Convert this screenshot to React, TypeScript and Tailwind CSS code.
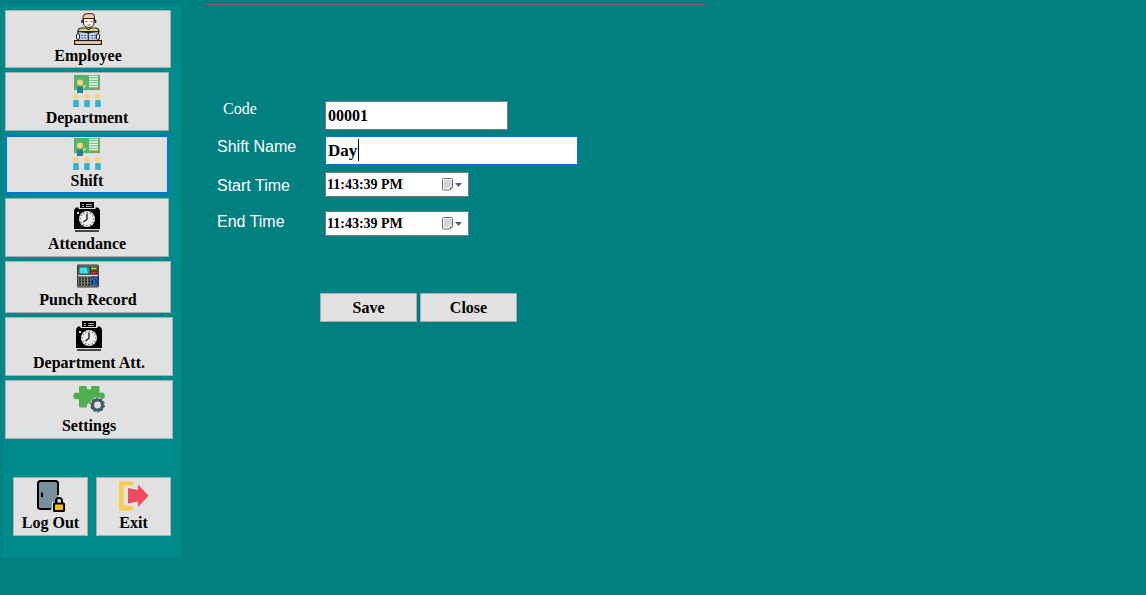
import { useState } from "react";
import type { ReactNode } from "react";
import clsx from "clsx";

function EmployeeIcon() {
  return (
    <svg width="28" height="32" viewBox="0 0 28 32" aria-hidden="true">
      <path d="M9 8V4Q9 .7 13 .7h5q2.500 0 2.500 3V8z" fill="#f6c9a0" stroke="#222" strokeWidth="1" />
      <path d="M9.500 5.500h10.500v4.500q0 4-5.200 4.500Q9.500 14 9.500 10z" fill="#fff1e0" stroke="#222" strokeWidth="1" />
      <path d="M8 7v3M21.500 7v3" stroke="#222" strokeWidth="1.500" />
      <path d="M11.500 8.500h2M16.500 8.500h2M13.500 12h3" stroke="#444" strokeWidth=".8" />
      <path d="M4 18.500q0-3.500 4-3.500h4l2.500 1.500L17 15h4q4 0 4 3.500z" fill="#e8d768" stroke="#222" strokeWidth="1.200" />
      <path d="M3.800 18.500l10.400 1.200 10.300-1.200V27.500H3.800z" fill="#bccdf7" stroke="#222" strokeWidth="1.200" />
      <path d="M14.300 19.500V27.500" stroke="#222" strokeWidth="1.200" />
      <path d="M7 22.500h2m1 0h2M7 25h2m1 0h2M17 22.500h2m1 0h2M17 25h2m1 0h2" stroke="#333" strokeWidth=".7" />
      <rect x="2.500" y="21" width="3" height="5" rx="1" fill="#fff6e8" stroke="#222" />
      <rect x="22.500" y="21" width="3" height="5" rx="1" fill="#fff6e8" stroke="#222" />
      <rect x=".6" y="27.600" width="26.800" height="3.800" fill="#f8d6b4" stroke="#222" strokeWidth="1.200" />
    </svg>
  );
}

function ClassIcon() {
  return (
    <svg width="28" height="32" viewBox="0 0 28 32" aria-hidden="true">
      <rect x="1" width="26" height="15" fill="#55b56b" />
      <rect x="1" y="15" width="26" height="1" fill="#d3d6da" />
      <path d="M16 1.500h9M16 4h9M16 6.500h9M16 9h9M16 11.500h9" stroke="#f4f8f4" strokeWidth="1.400" />
      <rect x="21" y="13" width="4" height="2" fill="#d97f46" />
      <circle cx="7" cy="7.500" r="3" fill="#fdd27c" />
      <path d="M9.500 13.500l3-3.500" stroke="#fdd27c" strokeWidth="1.800" />
      <path d="M4 18v-5.500q0-1 1-1h4q1 0 1 1V18z" fill="#238291" />
      {[3, 14, 25].map((x) => (
        <g key={x}>
          <circle cx={x} cy="21.500" r="2.800" fill="#fdd27c" />
          <path d={`M${x - 2.8} 32v-6q0-1 1-1h3.600q1 0 1 1v6z`} fill="#34b3d1" />
        </g>
      ))}
    </svg>
  );
}

function PunchClockIcon() {
  return (
    <svg width="26" height="32" viewBox="0 0 26 32" aria-hidden="true">
      <rect x="6" y="1" width="14" height="6" fill="#000" />
      <path d="M8 3.500h2M12 3.500h6M8 5.500h2M12 5.500h6" stroke="#aaa" />
      <path d="M2 6.500H4.500V8H21.500V6.500H24q2 1.500 2 3.500V28H0V10q0-2 2-3.500z" fill="#000" />
      <rect x="3" y="11" width="2" height="2" fill="#e1e1e1" />
      <circle cx="13" cy="18" r="8" fill="#ececec" />
      <circle cx="13" cy="18" r="6.700" fill="none" stroke="#333" strokeWidth="1.300" strokeDasharray="0.9 2.608" strokeDashoffset=".45" />
      <path d="M13 12.500v5.800L9.500 21" fill="none" stroke="#111" strokeWidth="1.300" />
      <path d="M1 30h24" stroke="#111" strokeWidth="1.500" />
    </svg>
  );
}

function KeypadIcon() {
  return (
    <svg width="22" height="25" viewBox="0 0 22 25" aria-hidden="true">
      <rect x=".6" y="1" width="20.800" height="22" rx="1" fill="#858585" stroke="#3c3c3c" strokeWidth="1.200" />
      <rect x="2" y="3" width="10" height="7" fill="#35e7ef" stroke="#222" strokeWidth=".8" />
      <path d="M10.500 4v3" stroke="#146b72" strokeDasharray="1 1" />
      <rect x="13.500" y="3" width="6.500" height="3" fill="#9ddc10" stroke="#222" strokeWidth=".8" />
      <rect x="13.500" y="7" width="6.500" height="3" fill="#e62142" stroke="#222" strokeWidth=".8" />
      <path d="M1 11.500h20" stroke="#d3d3d3" />
      <path d="M2 14.500h11M2 17.500h11M2 20.500h11" stroke="#1f2716" strokeWidth="2" strokeDasharray="2 1" />
      <rect x="14" y="13" width="6.500" height="8" fill="#2877e8" stroke="#122b55" strokeWidth=".8" />
      <path d="M15.500 20v-4l1.700-1.500L19 16v4M16.500 18h1.500" fill="none" stroke="#102247" strokeWidth="1" />
    </svg>
  );
}

function PuzzleIcon() {
  return (
    <svg width="32" height="32" viewBox="0 0 32 32" aria-hidden="true">
      <path
        d="M6 4Q6 3 7 3H13Q14.200 3 13.800 4.200Q13.200 6.500 16 6.500T18.200 4.200Q17.800 3 19 3H25.500Q26.500 3 26.500 4V9Q26.500 10.200 27.700 9.700Q30 9 31.300 10.600Q32.200 13 31.300 15Q30 16.500 27.700 15.800Q26.500 15.300 26.500 16.500V23H19.500Q18.300 23 18 21.800Q17.500 20 16 20T14 22Q14.200 24.500 13 24.500H7Q6 24.500 6 23.500V17Q6 15.500 4.800 16Q2.500 16.800 1 15.500Q-.3 13 1 10.500Q2.500 9 4.800 10Q6 10.300 6 9.200Z"
        fill="#4caf50"
      />
      <circle cx="24.500" cy="22" r="7.800" fill="#e1e1e1" />
      <circle cx="24.500" cy="22" r="5" fill="none" stroke="#455a64" strokeWidth="3.200" />
      <circle cx="24.500" cy="22" r="6.800" fill="none" stroke="#455a64" strokeWidth="1.200" strokeDasharray="2.670 1.603" />
    </svg>
  );
}

function DoorLockIcon() {
  return (
    <svg width="28" height="32" viewBox="0 0 28 32" aria-hidden="true">
      <rect x="1" y="1" width="20" height="28" rx="2.500" fill="#78909c" />
      <path d="M21 15V3.500Q21 1 18.500 1h-15Q1 1 1 3.500v23Q1 29 3.500 29H14" fill="none" stroke="#000" strokeWidth="2" />
      <path d="M5 12.500v4.500" stroke="#000" strokeWidth="2" />
      <path d="M15 22h4v8h-4z" fill="#e1e1e1" />
      <path d="M19 23v-2q0-3 3-3t3 3v2" fill="none" stroke="#000" strokeWidth="2" />
      <rect x="17" y="23.500" width="10" height="7.500" rx=".5" fill="#ffc107" stroke="#000" strokeWidth="2" />
    </svg>
  );
}

function ExitIcon() {
  return (
    <svg width="30" height="32" viewBox="0 0 30 32" aria-hidden="true">
      <path d="M14 5.500V1.500H0v29h14v-4.500H4.500V5.500z" fill="#f9cd4c" />
      <path d="M9 8l10 2V4.500L29.500 15.800 19 27v-5.500l-10 2z" fill="#f04a5d" />
    </svg>
  );
}

interface NavItem {
  label: string;
  icon: ReactNode;
  size: string;
}

const navItems: NavItem[] = [
  { label: "Employee", icon: <EmployeeIcon />, size: "w-[166px]" },
  { label: "Department", icon: <ClassIcon />, size: "w-[164px] pb-px" },
  { label: "Shift", icon: <ClassIcon />, size: "w-[164px] pb-px" },
  { label: "Attendance", icon: <PunchClockIcon />, size: "w-[164px] pb-px" },
  { label: "Punch Record", icon: <KeypadIcon />, size: "w-[166px] pb-px" },
  { label: "Department Att.", icon: <PunchClockIcon />, size: "w-[168px] pb-px" },
  { label: "Settings", icon: <PuzzleIcon />, size: "w-[168px] pb-px" },
];

function NavButton({
  item,
  active,
  onClick,
}: {
  item: NavItem;
  active?: boolean;
  onClick?: () => void;
}) {
  return (
    <button
      type="button"
      onClick={onClick}
      className={clsx(
        "flex flex-col items-center border bg-[#e1e1e1] pt-0.5 text-[16px] leading-[22px] font-bold whitespace-nowrap text-black",
        item.size,
        active ? "border-[#0078d7] ring-1 ring-[#0078d7] ring-inset" : "border-[#adadad]"
      )}
    >
      {item.icon}
      {item.label}
    </button>
  );
}

function TimeField({
  id,
  value,
  onChange,
}: {
  id: string;
  value: string;
  onChange: (v: string) => void;
}) {
  return (
    <div className="flex h-[25px] w-36 items-center border border-[#7a7a7a] bg-white pr-1.5">
      <input
        id={id}
        value={value}
        onChange={(e) => onChange(e.target.value)}
        className="min-w-0 flex-1 pl-px text-[14px] leading-5 font-bold text-black outline-none"
      />
      <button type="button" aria-label="Pick time" className="flex items-center gap-px">
        <svg width="12" height="13" viewBox="0 0 12 13" aria-hidden="true">
          <path d="M1.500 .5h8q1 0 1 1V9.500L8 12H1.500q-1 0-1-1v-9.500q0-1 1-1z" fill="#f5f7fa" stroke="#706868" />
          <path d="M2 3h7M2 5h7M2 7h7M2 9h5M3 2v8M5 2v8M7 2v7M9 2v6" stroke="#bac3d2" strokeWidth=".8" />
          <path d="M8 12V9.500h2.500z" fill="#706868" />
        </svg>
        <svg width="7" height="4" viewBox="0 0 7 4" aria-hidden="true">
          <path d="M0 0h7L3.500 4z" fill="#4a6087" />
        </svg>
      </button>
    </div>
  );
}

const labelClass = "w-[108px] shrink-0 font-['Liberation_Sans',Arial,sans-serif] text-[16px] leading-[22px] text-white";
const actionClass = "h-[29px] w-[97px] border border-[#adadad] bg-[#e1e1e1] text-[16px] leading-5 font-bold text-black";

export default function App() {
  const [active, setActive] = useState("Shift");
  const [code, setCode] = useState("00001");
  const [name, setName] = useState("Day");
  const [start, setStart] = useState("11:43:39 PM");
  const [end, setEnd] = useState("11:43:39 PM");

  return (
    <div className="flex min-h-screen items-start bg-[#008080] pl-0.5 font-['Liberation_Serif',serif]">
      <aside className="mt-[5px] w-[179px] shrink-0 bg-[#008b8b] pt-[5px] pb-[22px] pl-[3px]">
        <nav className="flex flex-col items-start gap-1">
          {navItems.map((item) => (
            <NavButton
              key={item.label}
              item={item}
              active={active === item.label}
              onClick={() => setActive(item.label)}
            />
          ))}
        </nav>
        <div className="mt-[38px] flex gap-2 pl-2">
          <NavButton item={{ label: "Log Out", icon: <DoorLockIcon />, size: "w-[75px] pb-px" }} />
          <NavButton item={{ label: "Exit", icon: <ExitIcon />, size: "w-[75px] pb-px" }} />
        </div>
      </aside>

      <main className="min-w-0 flex-1 pt-1 pl-6">
        <hr className="max-w-[501px] border-t border-[#8a5a5c]" />

        <form className="mt-24 pl-3" onSubmit={(e) => e.preventDefault()}>
          <div className="flex items-start">
            <label
              htmlFor="code"
              className="w-[108px] shrink-0 pl-1.5 text-[16px] leading-4 text-white"
            >
              Code
            </label>
            <input
              id="code"
              value={code}
              onChange={(e) => setCode(e.target.value)}
              className="h-[29px] w-[183px] border border-[#7a7a7a] bg-white pl-0.5 text-[16px] font-bold text-black outline-none"
            />
          </div>

          <div className="mt-1.5 flex items-start">
            <label htmlFor="name" className={labelClass}>
              Shift Name
            </label>
            <div className="relative">
              <input
                id="name"
                value={name}
                onChange={(e) => setName(e.target.value)}
                className="h-[29px] w-[253px] border border-[#0078d7] bg-white pl-0.5 text-[17px] font-bold text-black caret-transparent outline-none"
              />
              {/* text cursor */}
              <span className="pointer-events-none absolute top-[3px] left-[33px] h-[22px] w-px bg-black" />
            </div>
          </div>

          <div className="mt-[7px] flex items-end">
            <label htmlFor="start" className={labelClass}>
              Start Time
            </label>
            <TimeField id="start" value={start} onChange={setStart} />
          </div>

          <div className="mt-3.5 flex items-start">
            <label htmlFor="end" className={labelClass}>
              End Time
            </label>
            <TimeField id="end" value={end} onChange={setEnd} />
          </div>

          <div className="mt-[57px] flex gap-[3px] pl-[103px]">
            <button type="submit" className={actionClass}>
              Save
            </button>
            <button type="button" className={actionClass}>
              Close
            </button>
          </div>
        </form>
      </main>
    </div>
  );
}
